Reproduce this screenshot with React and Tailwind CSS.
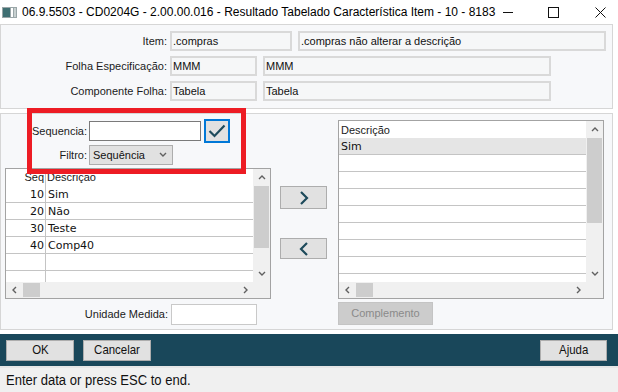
import React from 'react';

const sans = { fontFamily: '"Liberation Sans", Arial, sans-serif' };
const tahoma = { fontFamily: '"DejaVu Sans", Verdana, sans-serif' };

function Chevron({ dir = 'down', className = '' }) {
  const paths = {
    up: 'M1 5 L4 2 L7 5',
    down: 'M1 2 L4 5 L7 2',
    left: 'M5 1 L2 4 L5 7',
    right: 'M3 1 L6 4 L3 7',
  };
  return (
    <svg width="8" height="8" viewBox="0 0 8 8" className={className}>
      <path d={paths[dir]} fill="none" stroke="#606060" strokeWidth="1.4" />
    </svg>
  );
}

function VScroll({ thumb }) {
  return (
    <div className="w-[17px] h-full bg-[#f0f0f0] flex flex-col">
      <div className="h-[17px] flex items-center justify-center"><Chevron dir="up" /></div>
      <div className="bg-[#cdcdcd] mx-[1px]" style={{ height: thumb }} />
      <div className="flex-1" />
      <div className="h-[17px] flex items-center justify-center"><Chevron dir="down" /></div>
    </div>
  );
}

function HScroll() {
  return (
    <div className="h-[16px] bg-[#f0f0f0] flex">
      <div className="flex-1 flex">
        <div className="w-[17px] flex items-center justify-center"><Chevron dir="left" /></div>
        <div className="w-[17px] bg-[#cdcdcd] my-[1px]" />
        <div className="flex-1" />
        <div className="w-[17px] flex items-center justify-center"><Chevron dir="right" /></div>
      </div>
      <div className="w-[17px]" />
    </div>
  );
}

function LeftTable() {
  const rows = [['10', 'Sim'], ['20', 'Não'], ['30', 'Teste'], ['40', 'Comp40'], ['', ''], ['', '']];
  return (
    <div className="w-[266px] h-[131px] border border-[#a3a3a3] bg-white flex flex-col">
      <div className="flex-1 flex min-h-0">
        <div className="flex-1 overflow-hidden">
          <div className="h-[17px] flex text-[11px] leading-[17px] text-[#1b1b1b]" style={sans}>
            <div className="w-[40px] text-right pr-[1px] border-r border-[#c4c4c4]">Seq</div>
            <div className="pl-[1px]">Descrição</div>
          </div>
          {rows.map((r, i) => (
            <div key={i} className="h-[17px] flex border-b border-[#c4c4c4] text-[11px] text-[#111]" style={tahoma}>
              <div className="w-[40px] text-right pr-[1px] border-r border-[#c4c4c4] leading-[18px]">{r[0]}</div>
              <div className="pl-[2px] leading-[18px]">{r[1]}</div>
            </div>
          ))}
        </div>
        <VScroll thumb={62} />
      </div>
      <HScroll />
    </div>
  );
}

function RightTable() {
  return (
    <div className="w-[266px] h-[179px] border border-[#a3a3a3] bg-white flex flex-col">
      <div className="flex-1 flex min-h-0">
        <div className="flex-1 overflow-hidden">
          <div className="h-[17px] pl-[2px] text-[11px] leading-[18px] text-[#1b1b1b]" style={sans}>Descrição</div>
          <div className="h-[17px] pl-[2px] bg-[#e5e5e5] border-b border-[#c4c4c4] text-[11px] leading-[18px] text-[#111]" style={tahoma}>Sim</div>
          {Array.from({ length: 8 }).map((_, i) => (
            <div key={i} className="h-[17px] border-b border-[#c4c4c4]" />
          ))}
        </div>
        <VScroll thumb={85} />
      </div>
      <HScroll />
    </div>
  );
}

function Field({ w, children }) {
  return (
    <div className="h-[20px] border-2 border-[#d9d9d9] bg-[#f6f7f8] pl-[1px] text-[11px] leading-[17px] text-[#111] overflow-hidden whitespace-nowrap" style={{ width: w }}>
      {children}
    </div>
  );
}

function ArrowButton({ dir, h }) {
  return (
    <div className="w-[47px] border border-[#adadad] bg-[#e1e1e1] flex items-center justify-center" style={{ height: h }}>
      <svg width="10" height="14" viewBox="0 0 10 14">
        <path d={dir === 'right' ? 'M2 1 L8 7 L2 13' : 'M8 1 L2 7 L8 13'} fill="none" stroke="#1d4a5b" strokeWidth="2.2" />
      </svg>
    </div>
  );
}

function FooterButton({ w, className = '', children }) {
  return (
    <div className={`h-[21px] border border-[#adadad] bg-[#e1e1e1] flex items-center justify-center text-[13px] text-[#111] ${className}`} style={{ width: w }}>
      <span className="inline-block scale-x-[0.88]">{children}</span>
    </div>
  );
}

export default function App() {
  return (
    <div className="w-[618px] h-[392px] bg-white relative overflow-hidden text-[#111]" style={sans}>
      {/* title bar */}
      <div className="h-[24px] flex items-center">
        <svg width="15" height="11" viewBox="0 0 15 11" className="ml-[2px]">
          <rect x="0" y="0" width="15" height="11" fill="#9aa6a8" />
          <rect x="1" y="1" width="7" height="9" fill="#3f6f72" />
          <rect x="9" y="1" width="2" height="9" fill="#ffffff" />
          <rect x="12" y="1" width="2" height="9" fill="#c7d0d0" />
        </svg>
        <span className="ml-[5px] text-[12px] text-black">06.9.5503 - CD0204G - 2.00.00.016 - Resultado Tabelado Característica Item - 10 - 8183</span>
        <div className="flex-1" />
        <svg width="12" height="12" viewBox="0 0 12 12" className="mr-[34px]"><path d="M1 6.5 H11" stroke="#111" strokeWidth="1" /></svg>
        <svg width="11" height="11" viewBox="0 0 11 11" className="mr-[36px]"><rect x="0.5" y="0.5" width="10" height="10" fill="none" stroke="#111" strokeWidth="1" /></svg>
        <svg width="11" height="11" viewBox="0 0 11 11" className="mr-[12px]"><path d="M0.5 0.5 L10.5 10.5 M10.5 0.5 L0.5 10.5" stroke="#111" strokeWidth="1" /></svg>
      </div>

      {/* top panel */}
      <div className="w-[613px] h-[85px] border border-[#d6d6d6] bg-[#f7f8fa] pt-[6px] flex flex-col gap-[5px]">
        <div className="flex items-center h-[20px]">
          <div className="w-[166px] text-right text-[11px] text-[#1b1b1b]">Item:</div>
          <div className="ml-[3px]"><Field w={122}>.compras</Field></div>
          <div className="ml-[6px]"><Field w={308}>.compras não alterar a descrição</Field></div>
        </div>
        <div className="flex items-center h-[20px]">
          <div className="w-[166px] text-right text-[11px] text-[#1b1b1b]">Folha Especificação:</div>
          <div className="ml-[3px]"><Field w={87}>MMM</Field></div>
          <div className="ml-[6px]"><Field w={288}>MMM</Field></div>
        </div>
        <div className="flex items-center h-[20px]">
          <div className="w-[166px] text-right text-[11px] text-[#1b1b1b]">Componente Folha:</div>
          <div className="ml-[3px]"><Field w={87}>Tabela</Field></div>
          <div className="ml-[6px]"><Field w={288}>Tabela</Field></div>
        </div>
      </div>

      {/* middle panel */}
      <div className="mt-[4px] w-[613px] h-[217px] border border-[#d6d6d6] bg-[#f7f8fa] flex">
        <div className="pl-[4px] flex flex-col">
          <div className="mt-[5px] h-[24px] flex items-center">
            <div className="w-[84px] pr-[2px] text-right text-[11px] text-[#1b1b1b]">Sequencia:</div>
            <div className="w-[112px] h-[20px] border border-[#7a7a7a] bg-white" />
            <div className="ml-[3px] w-[26px] h-[24px] border-2 border-[#0078d7] bg-[#e1e1e1] flex items-center justify-center">
              <svg width="18" height="14" viewBox="0 0 18 14">
                <path d="M1.5 7 L6.5 12 L16.5 1.5" fill="none" stroke="#1d4a5b" strokeWidth="2.2" />
              </svg>
            </div>
          </div>
          <div className="mt-[2px] h-[20px] flex items-center">
            <div className="w-[84px] pr-[2px] text-right text-[11px] text-[#1b1b1b]">Filtro:</div>
            <div className="w-[84px] h-[20px] border border-[#adadad] bg-[#e1e1e1] flex items-center pl-[3px] pr-[5px] text-[11px] text-[#111]">
              <span className="flex-1">Sequência</span>
              <Chevron dir="down" />
            </div>
          </div>
          <div className="mt-[3px]"><LeftTable /></div>
          <div className="mt-[5px] h-[21px] flex items-center">
            <div className="w-[166px] pr-[3px] text-right text-[11px] text-[#1b1b1b]">Unidade Medida:</div>
            <div className="w-[86px] h-[21px] border border-[#c9c9c9] bg-white" />
          </div>
        </div>

        <div className="ml-[9px] flex flex-col">
          <div className="mt-[72px]"><ArrowButton dir="right" h={23} /></div>
          <div className="mt-[29px]"><ArrowButton dir="left" h={21} /></div>
        </div>

        <div className="ml-[11px] flex flex-col">
          <div className="mt-[6px]"><RightTable /></div>
          <div className="mt-[3px] w-[95px] h-[23px] border border-[#c4c4c4] bg-[#cccccc] flex items-center justify-center text-[11px] text-[#8a8a8a]">Complemento</div>
        </div>
      </div>

      {/* footer */}
      <div className="mt-[4px] h-[32px] bg-[#19475a] flex items-center">
        <FooterButton w={68} className="ml-[6px]">OK</FooterButton>
        <FooterButton w={68} className="ml-[9px]">Cancelar</FooterButton>
        <div className="flex-1" />
        <FooterButton w={67} className="mr-[11px]">Ajuda</FooterButton>
      </div>

      {/* status bar */}
      <div className="h-[26px] border-t-2 border-[#e6e6e6] bg-[#f0f0f0] flex items-center pl-[6px] text-[14px] text-[#111]">
        <span className="inline-block origin-left scale-x-[0.93]">Enter data or press ESC to end.</span>
      </div>

      {/* red highlight annotation */}
      <div className="absolute left-[27px] top-[108px] w-[219px] h-[66px] border-[5px] border-[#ed1c24] pointer-events-none" />
    </div>
  );
}
